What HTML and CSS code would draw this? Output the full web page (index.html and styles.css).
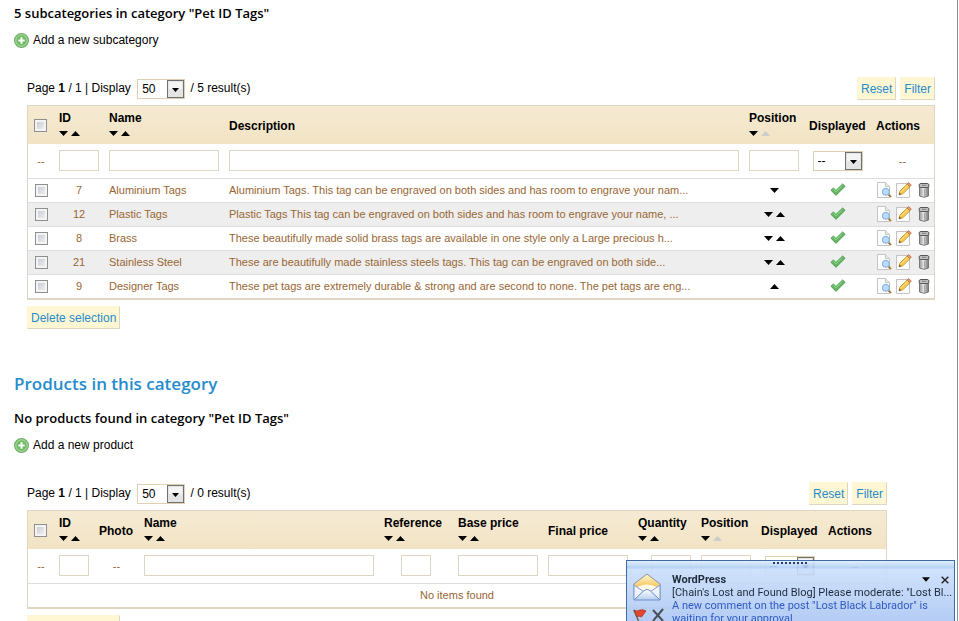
FILE: index.html
```
<!DOCTYPE html>
<html lang="en">
<head>
    <meta charset="UTF-8">
    <meta name="viewport" content="width=device-width, initial-scale=1.0">
    <title>Catalog - Pet ID Tags</title>
    <link rel="stylesheet" href="styles.css">
</head>
<body>
    <!-- Icon sprite -->
    <svg class="sprite" aria-hidden="true">
        <defs>
            <linearGradient id="trashFill" x1="0" x2="1" y1="0" y2="0">
                <stop offset="0" stop-color="#888"/>
                <stop offset=".35" stop-color="#f4f4f4"/>
                <stop offset="1" stop-color="#777"/>
            </linearGradient>
            <radialGradient id="addFill" cx=".5" cy=".5" r=".5">
                <stop offset="0" stop-color="#5cb04f"/>
                <stop offset="1" stop-color="#7fc373"/>
            </radialGradient>
            <linearGradient id="flapFill" x1="0" x2="0" y1="0" y2="1">
                <stop offset="0" stop-color="#fff3c4"/>
                <stop offset="1" stop-color="#f6b840"/>
            </linearGradient>
            <linearGradient id="mailFill" x1="0" x2="0" y1="0" y2="1">
                <stop offset="0" stop-color="#fff"/>
                <stop offset="1" stop-color="#b4cdf0"/>
            </linearGradient>
        </defs>
        <symbol id="down" viewBox="0 0 9 5"><path d="M0 0h9L4.500 5z"/></symbol>
        <symbol id="up" viewBox="0 0 9 5"><path d="M0 5h9L4.500 0z"/></symbol>
        <symbol id="add" viewBox="0 0 14 14">
            <circle cx="7" cy="7" r="6.500" fill="url(#addFill)" stroke="#6fae69"/>
            <circle cx="7" cy="7" r="5.300" fill="none" stroke="#b5dfad" stroke-width=".8"/>
            <path d="M7 4v6M4 7h6" stroke="#fff" stroke-width="2"/>
        </symbol>
        <symbol id="check" viewBox="0 0 16 16">
            <path d="M1 8.300L3.500 6 6 8.500 12.600 2 15 4.300 6 13.300z" fill="#63b963" stroke="#459a4a" stroke-linejoin="round"/>
            <path d="M2.700 8.200l1-.9 2.300 2.500 6.600-6.500" fill="none" stroke="#94d791"/>
        </symbol>
        <symbol id="view" viewBox="0 0 16 16">
            <path d="M1.500.5h8l4 4v11h-12z" fill="#fdfdfd" stroke="#c4c4c4"/>
            <path d="M9.500.5v4h4" fill="#eee" stroke="#c4c4c4"/>
            <path d="M12.500 12.500l2.500 2.500" stroke="#b5793d" stroke-width="2"/>
            <circle cx="9.800" cy="9.800" r="3.500" fill="#b9dcfa" stroke="#79aee0"/>
        </symbol>
        <symbol id="edit" viewBox="0 0 16 16">
            <path d="M.5 1.500h13v14H.5z" fill="#fdfdfd" stroke="#c4c4c4"/>
            <path d="M3 12.800l1-3.800L11 2l2.800 2.800L6.800 11.800z" fill="#f9c84a" stroke="#c48a2c" stroke-width=".8" stroke-linejoin="round"/>
            <path d="M5 10l6.800-6.800" stroke="#ffe79c"/>
            <path d="M11.200 1.800l2.800 2.800 1.300-1.500L12.800.6z" fill="#e29a6c" stroke="#b8693f" stroke-width=".7"/>
            <path d="M3 12.800l.6-2 1.400 1.400z" fill="#333"/>
        </symbol>
        <symbol id="trash" viewBox="0 0 16 16">
            <path d="M3.500 4h9v10q-4.500 2.500-9 0z" fill="url(#trashFill)" stroke="#777"/>
            <path d="M6 7v6.500M8.500 7.200v6.500M10.500 7v6.500" stroke="#999" stroke-width=".8"/>
            <rect x="3" y="1.500" width="10" height="4" rx="2" fill="#c9c9c9" stroke="#555"/>
            <path d="M5.500 3.300h5" stroke="#777"/>
        </symbol>
        <symbol id="mail" viewBox="0 0 28 28">
            <path d="M1 11L14 1l13 10v15.500H1z" fill="url(#flapFill)" stroke="#8a8f9c"/>
            <path d="M3 11l11-8 11 8v6H3z" fill="url(#flapFill)"/>
            <path d="M4 14q10-5 20 0v9H4z" fill="#fffbe8"/>
            <path d="M1 12l9.500 6.500L1 27zM27 12l-9.500 6.500L27 27z" fill="#eef4fd" stroke="#7d9bd0"/>
            <path d="M1 27l10-9.500q3-2 6 0L27 27z" fill="url(#mailFill)" stroke="#6f8fc8"/>
        </symbol>
        <symbol id="flag" viewBox="0 0 14 14">
            <path d="M1 2q3 2 6 0 3-1 6 1L8.500 9Q6 7.500 4 9z" fill="#e8432c" stroke="#a33a2c" stroke-width=".8"/>
            <path d="M.8 2L6 14" stroke="#7a5a4a" stroke-width="1.500"/>
        </symbol>
        <symbol id="cross" viewBox="0 0 14 14">
            <path d="M2 2l10 11M12 1L2 13" stroke="#4a4f59" stroke-width="2" fill="none"/>
        </symbol>
        <symbol id="close" viewBox="0 0 8 8">
            <path d="M.7.7l6.600 6.600M7.300.7L.7 7.300" stroke="#222" stroke-width="1.400" fill="none"/>
        </symbol>
    </svg>

    <main class="content">
        <section>
            <h3>5 subcategories in category "Pet ID Tags"</h3>
            <a class="add" href="#"><svg><use href="#add"/></svg>Add a new subcategory</a>

            <form class="list">
                <div class="toolbar">
                    <label>Page <b>1</b> / 1 | Display
                        <select class="per-page"><option>50</option></select>
                        / 5 result(s)</label>
                    <div class="buttons">
                        <button type="button" class="button">Reset</button>
                        <button type="button" class="button">Filter</button>
                    </div>
                </div>
                <table>
                    <colgroup>
                        <col class="w-check"><col class="w-id"><col class="w-name"><col>
                        <col class="w-position"><col class="w-displayed"><col class="w-actions">
                    </colgroup>
                    <thead>
                        <tr>
                            <th class="check"><input type="checkbox" aria-label="Select all"></th>
                            <th>ID<span class="sort"><svg><use href="#down"/></svg><svg><use href="#up"/></svg></span></th>
                            <th>Name<span class="sort"><svg><use href="#down"/></svg><svg><use href="#up"/></svg></span></th>
                            <th>Description</th>
                            <th>Position<span class="sort"><svg><use href="#down"/></svg><svg class="off"><use href="#up"/></svg></span></th>
                            <th>Displayed</th>
                            <th>Actions</th>
                        </tr>
                        <tr class="filters">
                            <td class="center">--</td>
                            <td><input type="text" aria-label="ID"></td>
                            <td><input type="text" aria-label="Name"></td>
                            <td><input type="text" aria-label="Description"></td>
                            <td><input type="text" aria-label="Position"></td>
                            <td class="center"><select aria-label="Displayed"><option>--</option></select></td>
                            <td class="center">--</td>
                        </tr>
                    </thead>
                    <tbody>
                        <tr>
                            <td class="center"><input type="checkbox" aria-label="Aluminium Tags"></td>
                            <td class="center">7</td>
                            <td>Aluminium Tags</td>
                            <td>Aluminium Tags. This tag can be engraved on both sides and has room to engrave your nam...</td>
                            <td><span class="move"><svg><use href="#down"/></svg></span></td>
                            <td class="center"><svg class="icon"><use href="#check"/></svg></td>
                            <td><span class="actions"><a href="#" aria-label="View"><svg class="icon"><use href="#view"/></svg></a><a href="#" aria-label="Edit"><svg class="icon"><use href="#edit"/></svg></a><a href="#" aria-label="Delete"><svg class="icon"><use href="#trash"/></svg></a></span></td>
                        </tr>
                        <tr>
                            <td class="center"><input type="checkbox" aria-label="Plastic Tags"></td>
                            <td class="center">12</td>
                            <td>Plastic Tags</td>
                            <td>Plastic Tags This tag can be engraved on both sides and has room to engrave your name, ...</td>
                            <td><span class="move"><svg><use href="#down"/></svg><svg><use href="#up"/></svg></span></td>
                            <td class="center"><svg class="icon"><use href="#check"/></svg></td>
                            <td><span class="actions"><a href="#" aria-label="View"><svg class="icon"><use href="#view"/></svg></a><a href="#" aria-label="Edit"><svg class="icon"><use href="#edit"/></svg></a><a href="#" aria-label="Delete"><svg class="icon"><use href="#trash"/></svg></a></span></td>
                        </tr>
                        <tr>
                            <td class="center"><input type="checkbox" aria-label="Brass"></td>
                            <td class="center">8</td>
                            <td>Brass</td>
                            <td>These beautifully made solid brass tags are available in one style only a Large precious h...</td>
                            <td><span class="move"><svg><use href="#down"/></svg><svg><use href="#up"/></svg></span></td>
                            <td class="center"><svg class="icon"><use href="#check"/></svg></td>
                            <td><span class="actions"><a href="#" aria-label="View"><svg class="icon"><use href="#view"/></svg></a><a href="#" aria-label="Edit"><svg class="icon"><use href="#edit"/></svg></a><a href="#" aria-label="Delete"><svg class="icon"><use href="#trash"/></svg></a></span></td>
                        </tr>
                        <tr>
                            <td class="center"><input type="checkbox" aria-label="Stainless Steel"></td>
                            <td class="center">21</td>
                            <td>Stainless Steel</td>
                            <td>These are beautifully made stainless steels tags. This tag can be engraved on both side...</td>
                            <td><span class="move"><svg><use href="#down"/></svg><svg><use href="#up"/></svg></span></td>
                            <td class="center"><svg class="icon"><use href="#check"/></svg></td>
                            <td><span class="actions"><a href="#" aria-label="View"><svg class="icon"><use href="#view"/></svg></a><a href="#" aria-label="Edit"><svg class="icon"><use href="#edit"/></svg></a><a href="#" aria-label="Delete"><svg class="icon"><use href="#trash"/></svg></a></span></td>
                        </tr>
                        <tr>
                            <td class="center"><input type="checkbox" aria-label="Designer Tags"></td>
                            <td class="center">9</td>
                            <td>Designer Tags</td>
                            <td>These pet tags are extremely durable &amp; strong and are second to none. The pet tags are eng...</td>
                            <td><span class="move"><svg><use href="#up"/></svg></span></td>
                            <td class="center"><svg class="icon"><use href="#check"/></svg></td>
                            <td><span class="actions"><a href="#" aria-label="View"><svg class="icon"><use href="#view"/></svg></a><a href="#" aria-label="Edit"><svg class="icon"><use href="#edit"/></svg></a><a href="#" aria-label="Delete"><svg class="icon"><use href="#trash"/></svg></a></span></td>
                        </tr>
                    </tbody>
                </table>
                <button type="button" class="button">Delete selection</button>
            </form>
        </section>

        <section>
            <h2>Products in this category</h2>
            <h3>No products found in category "Pet ID Tags"</h3>
            <a class="add" href="#"><svg><use href="#add"/></svg>Add a new product</a>

            <form class="list products">
                <div class="toolbar">
                    <label>Page <b>1</b> / 1 | Display
                        <select class="per-page"><option>50</option></select>
                        / 0 result(s)</label>
                    <div class="buttons">
                        <button type="button" class="button">Reset</button>
                        <button type="button" class="button">Filter</button>
                    </div>
                </div>
                <table>
                    <colgroup>
                        <col class="w-check"><col class="w-short"><col class="w-photo"><col>
                        <col class="w-reference"><col class="w-price"><col class="w-price"><col class="w-quantity">
                        <col class="w-position"><col class="w-displayed"><col class="w-actions">
                    </colgroup>
                    <thead>
                        <tr>
                            <th class="check"><input type="checkbox" aria-label="Select all"></th>
                            <th>ID<span class="sort"><svg><use href="#down"/></svg><svg><use href="#up"/></svg></span></th>
                            <th>Photo</th>
                            <th>Name<span class="sort"><svg><use href="#down"/></svg><svg><use href="#up"/></svg></span></th>
                            <th>Reference<span class="sort"><svg><use href="#down"/></svg><svg><use href="#up"/></svg></span></th>
                            <th>Base price<span class="sort"><svg><use href="#down"/></svg><svg><use href="#up"/></svg></span></th>
                            <th>Final price</th>
                            <th>Quantity<span class="sort"><svg><use href="#down"/></svg><svg><use href="#up"/></svg></span></th>
                            <th>Position<span class="sort"><svg><use href="#down"/></svg><svg class="off"><use href="#up"/></svg></span></th>
                            <th>Displayed</th>
                            <th>Actions</th>
                        </tr>
                        <tr class="filters">
                            <td class="center">--</td>
                            <td><input type="text" aria-label="ID"></td>
                            <td class="center">--</td>
                            <td><input type="text" aria-label="Name"></td>
                            <td class="center"><input type="text" class="tiny" aria-label="Reference"></td>
                            <td><input type="text" aria-label="Base price"></td>
                            <td><input type="text" aria-label="Final price"></td>
                            <td class="right"><input type="text" class="small" aria-label="Quantity"></td>
                            <td><input type="text" aria-label="Position"></td>
                            <td class="center"><select aria-label="Displayed"><option>--</option></select></td>
                            <td class="center">--</td>
                        </tr>
                    </thead>
                    <tbody>
                        <tr><td class="center" colspan="11">No items found</td></tr>
                    </tbody>
                </table>
                <button type="button" class="button">Delete selection</button>
            </form>
        </section>
    </main>

    <!-- New mail alert -->
    <aside class="alert">
        <div class="grip"></div>
        <div class="alert-icons">
            <svg class="mail"><use href="#mail"/></svg>
            <button type="button" aria-label="Flag"><svg><use href="#flag"/></svg></button>
            <button type="button" aria-label="Delete"><svg><use href="#cross"/></svg></button>
        </div>
        <div class="alert-text">
            <div class="alert-head">
                <strong>WordPress</strong>
                <button type="button" aria-label="Options"><svg class="caret"><use href="#down"/></svg></button>
                <button type="button" aria-label="Close"><svg class="close"><use href="#close"/></svg></button>
            </div>
            <p class="subject">[Chain's Lost and Found Blog] Please moderate: "Lost Bl...</p>
            <p class="preview">A new comment on the post "Lost Black Labrador" is<br>waiting for your approval</p>
        </div>
    </aside>
</body>
</html>
```
FILE: styles.css
```
* {
    box-sizing: border-box;
}

body {
    margin: 0;
    height: 100vh;
    overflow: hidden;
    background: #fff;
    color: #000;
    font-family: "Liberation Sans", Arial, sans-serif;
    font-size: 12px;
}

.sprite {
    position: absolute;
    width: 0;
    height: 0;
}

.content {
    min-height: 100vh;
    margin-right: 1px;
    padding: 3px 22px 0 14px;
    border-right: 1px solid #8c8c8c;
}

h2,
h3 {
    margin: 0;
    font-family: "Trebuchet MS", "Open Sans", sans-serif;
    font-weight: 600;
}

h2 {
    margin: 43px 0 12px;
    font-size: 17px;
    line-height: 24px;
    color: #268ccd;
}

h3 {
    font-size: 13px;
    line-height: 20px;
}

.add {
    display: flex;
    align-items: center;
    gap: 4px;
    margin-top: 9px;
    line-height: 16px;
    color: #000;
    text-decoration: none;
}

.add svg {
    width: 15px;
    height: 15px;
}

.list {
    margin: 29px 0 0 13px;
}

.products {
    max-width: 860px;
}

.toolbar {
    display: flex;
    align-items: center;
    justify-content: space-between;
    margin-bottom: 5px;
}

.buttons {
    display: flex;
    gap: 4px;
}

.button {
    height: 23px;
    padding: 0 3px;
    border: 1px solid;
    border-color: #fff6d3 #dfd5c3 #dfd5c3 #fff6d3;
    background: #fff6d3;
    color: #268ccd;
    font-family: inherit;
    font-size: 12px;
    cursor: pointer;
}

select {
    appearance: none;
    width: 50px;
    height: 20px;
    padding: 0 4px;
    border: 1px solid #e0d0b1;
    border-radius: 0;
    background: #fff url("data:image/svg+xml,%3Csvg xmlns='http://www.w3.org/2000/svg' width='17' height='18'%3E%3Crect x='.5' y='.5' width='16' height='17' fill='%23e4e4e4' stroke='%23707070'/%3E%3Cpath d='M2 2h13v7H2z' fill='%23f4f4f4'/%3E%3Cpath d='M5 8h7l-3.500 4z'/%3E%3C/svg%3E") no-repeat right center;
    color: #000;
    font-family: inherit;
    font-size: 12px;
    vertical-align: middle;
}

.per-page {
    width: 48px;
    margin: 0 2px 0 3px;
}

table {
    width: 100%;
    table-layout: fixed;
    border-collapse: separate;
    border-spacing: 0;
    border: 1px solid #dfd5c3;
    border-bottom-width: 2px;
}

.w-check { width: 26px; }
.w-id { width: 50px; }
.w-short { width: 40px; }
.w-photo { width: 45px; }
.w-name { width: 120px; }
.w-reference { width: 74px; }
.w-price { width: 90px; }
.w-quantity { width: 63px; }
.w-position { width: 60px; }
.w-displayed { width: 67px; }
.w-actions { width: 63px; }

thead tr:first-child {
    height: 38px;
    background: linear-gradient(#f5ead2, #f2e3c4);
}

th,
td {
    padding: 0 5px;
    text-align: left;
    white-space: nowrap;
}

th {
    padding-top: 1px;
    line-height: 16px;
}

th.check {
    padding: 0 6px;
}

.sort,
.move {
    display: flex;
    align-items: center;
    gap: 3px;
    height: 16px;
}

.move {
    justify-content: center;
}

.sort svg,
.move svg {
    width: 9px;
    height: 5px;
}

.sort .off {
    fill: #ccc;
}

.center {
    text-align: center;
}

.right {
    text-align: right;
}

td {
    height: 24px;
    padding-bottom: 1px;
    border-top: 1px solid #dedede;
    color: #996633;
    font-size: 11px;
}

.filters td {
    height: 34px;
    border-top: 0;
}

tbody tr:nth-child(even) {
    background: #eee;
}

input[type="text"] {
    display: inline-block;
    width: 100%;
    height: 21px;
    padding: 0 2px;
    border: 1px solid #dfd5c3;
    vertical-align: middle;
}

input[type="text"].tiny {
    width: 30px;
}

input[type="text"].small {
    width: 40px;
}

input[type="checkbox"] {
    appearance: none;
    display: inline-block;
    width: 13px;
    height: 13px;
    margin: 0;
    border: 1px solid #8e8f8f;
    background: linear-gradient(135deg, #c0c5cd, #f6f6f6);
    box-shadow: inset 0 0 0 2px #f4f4f4;
    vertical-align: middle;
}

.icon {
    display: inline-block;
    width: 16px;
    height: 16px;
    vertical-align: middle;
}

.actions {
    display: flex;
    gap: 4px;
}

.actions a {
    display: flex;
}

.list > .button {
    margin-top: 6px;
}

.alert {
    position: fixed;
    right: 4px;
    bottom: 0;
    display: flex;
    gap: 7px;
    width: 329px;
    height: 61px;
    padding: 12px 3px 0 6px;
    overflow: hidden;
    border: 1px solid #3f6aa8;
    border-bottom: 0;
    background: linear-gradient(rgba(222, 236, 253, 0.9), rgba(172, 205, 246, 0.9) 7px, rgba(202, 223, 251, 0.9) 8px, rgba(172, 199, 243, 0.9));
    color: #1f2b3d;
    font-family: Tahoma, Roboto, sans-serif;
    font-size: 11px;
    line-height: 13px;
}

.alert button {
    display: flex;
    padding: 0;
    border: 0;
    background: none;
    cursor: pointer;
}

.grip {
    position: absolute;
    top: 1px;
    left: 50%;
    width: 36px;
    height: 2px;
    margin-left: -18px;
    background: repeating-linear-gradient(90deg, #24406e 0 2px, transparent 2px 4px);
}

.alert-icons {
    display: flex;
    flex-wrap: wrap;
    flex: none;
    gap: 7px 4px;
    width: 32px;
}

.alert-icons .mail {
    width: 28px;
    height: 28px;
}

.alert-icons button svg {
    width: 14px;
    height: 14px;
}

.alert-text {
    flex: 1;
    min-width: 0;
}

.alert-head {
    display: flex;
    align-items: center;
    gap: 11px;
    padding-right: 2px;
}

.alert-head strong {
    flex: 1;
}

.caret {
    width: 8px;
    height: 5px;
}

.close {
    width: 8px;
    height: 8px;
}

.alert p {
    margin: 0;
}

.subject {
    white-space: nowrap;
}

.preview {
    color: #2f5bc4;
}
```
